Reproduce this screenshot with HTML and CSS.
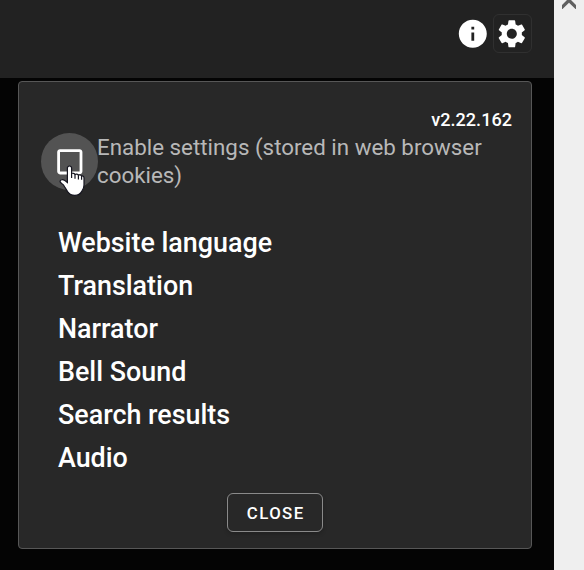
FILE: index.html
```
<!DOCTYPE html>
<html lang="en">
<head>
<meta charset="utf-8">
<title>Settings</title>
<link rel="stylesheet" href="styles.css">
</head>
<body>
<div class="app">
  <main class="page">
    <header class="topbar">
      <button class="icon-button" aria-label="Information">
        <svg class="icon" viewBox="0 0 24 24"><path d="M12 2C6.480 2 2 6.480 2 12s4.480 10 10 10 10-4.480 10-10S17.520 2 12 2zm1 15h-2v-6h2v6zm0-8h-2V7h2v2z"/></svg>
      </button>
      <button class="icon-button icon-button-active" aria-label="Settings">
        <svg class="icon" viewBox="0 0 24 24"><path d="M19.140 12.940c.04-.3.060-.61.060-.94 0-.32-.02-.64-.07-.94l2.030-1.580c.18-.14.23-.41.120-.61l-1.920-3.320c-.12-.22-.37-.29-.59-.22l-2.390.96c-.5-.38-1.030-.7-1.620-.94l-.36-2.540c-.04-.24-.24-.41-.48-.41h-3.840c-.24 0-.43.170-.47.410l-.36 2.540c-.59.240-1.130.570-1.620.940l-2.390-.96c-.22-.08-.47 0-.59.220L2.740 8.870c-.12.210-.08.470.120.610l2.030 1.580c-.05.300-.09.630-.09.940s.02.640.070.940l-2.030 1.580c-.18.140-.23.410-.12.610l1.920 3.320c.12.220.37.290.59.220l2.390-.96c.5.380 1.030.700 1.620.940l.36 2.540c.05.240.24.410.48.410h3.840c.24 0 .44-.17.470-.41l.36-2.540c.59-.24 1.130-.56 1.620-.94l2.390.96c.22.080.47 0 .59-.22l1.920-3.320c.12-.22.070-.47-.12-.61l-2.010-1.580zM12 15.600c-1.980 0-3.600-1.620-3.600-3.600s1.620-3.600 3.600-3.600 3.600 1.620 3.600 3.600-1.620 3.600-3.600 3.600z"/></svg>
      </button>
    </header>
    <section class="panel">
      <div class="version">v2.22.162</div>
      <label class="enable">
        <span class="checkbox">
          <svg class="icon" viewBox="0 0 24 24"><path d="M19 5v14H5V5h14m0-2H5c-1.100 0-2 .9-2 2v14c0 1.100.9 2 2 2h14c1.100 0 2-.9 2-2V5c0-1.100-.9-2-2-2z"/></svg>
          <svg class="pointer" viewBox="0 0 26 32"><path d="M10.500 1c1.300 0 2.100.9 2.100 2.100v5.400c1-.5 2.900-.3 3.400.9 1-.6 2.900-.4 3.400.8 1-.5 2.700-.3 3.200.8 1.200-.3 2.400.4 2.400 2v6.900c0 3-1 4.800-2.200 6.500-1.300 2.500-3.800 4-7 4-3.400 0-5.500-1.200-7.200-3.800l-3-4.900c-.7-1.400-1.500-2.300-2.900-3.200-1.300-.9-2-1.700-1.500-2.700.6-1.300 2.700-1.400 4.200-.5 1.400.8 2.200 1.500 3 2.200V3.100C8.400 1.900 9.200 1 10.500 1z"/><path class="pointer-lines" d="M12.600 8.500v4.500M16 9.400v4.400M19.400 10.200v4.200M22.600 11v3.800"/></svg>
        </span>
        <span class="enable-text">Enable settings (stored in web browser cookies)</span>
      </label>
      <nav class="sections">
        <div>Website language</div>
        <div>Translation</div>
        <div>Narrator</div>
        <div>Bell Sound</div>
        <div>Search results</div>
        <div>Audio</div>
      </nav>
      <button class="close">CLOSE</button>
    </section>
  </main>
  <aside class="scrollbar">
    <svg class="scroll-up" viewBox="0 0 14 9"><path d="M0 5L7-2l7 7v4h-.5L7 2.800.500 9H0z"/></svg>
  </aside>
</div>
</body>
</html>
```
FILE: styles.css
```
* {
  box-sizing: border-box;
}

body {
  margin: 0;
  font-family: Roboto, sans-serif;
  color: #fff;
  background: #040404;
}

button {
  padding: 0;
  border: 1px solid transparent;
  color: inherit;
  font-family: inherit;
  background: none;
}

.app {
  display: flex;
  height: 570px;
  overflow: hidden;
}

.page {
  width: 554px;
}

.topbar {
  display: flex;
  justify-content: flex-end;
  height: 78px;
  padding: 14px 22px 0 0;
  background: #222;
}

.icon-button {
  display: grid;
  place-items: center;
  width: 39px;
  height: 39px;
  padding-right: 1.500px;
  border-radius: 6px;
}

.icon-button-active {
  border-color: #303030;
}

.icon {
  display: block;
  width: 33.600px;
  height: 33.600px;
  fill: #fff;
}

.panel {
  display: flex;
  flex-direction: column;
  width: 514px;
  height: 468px;
  margin: 3px 0 0 18px;
  padding: 27px 19px 0;
  border: 1px solid #575757;
  border-radius: 4px;
  background: #282828;
}

.version {
  align-self: flex-end;
  font-size: 18.100px;
  font-weight: 500;
  line-height: 22px;
}

.enable {
  display: flex;
  align-items: center;
  height: 57px;
  margin: 2px 0 0 3px;
}

.checkbox {
  position: relative;
  display: grid;
  flex: none;
  place-items: center;
  width: 57px;
  height: 57px;
  border-radius: 50%;
  background: #535353;
}

.pointer {
  position: absolute;
  top: 32px;
  left: 18px;
  width: 26px;
  height: 32px;
  fill: #fff;
  stroke: #15151f;
  stroke-width: 1.200;
}

.pointer-lines {
  fill: none;
}

.enable-text {
  width: 400px;
  margin: -2px 0 0 -1px;
  color: #b8b8b8;
  font-size: 22.350px;
  line-height: 28px;
}

.sections {
  margin: 32px 0 0 20px;
  font-size: 26.880px;
  font-weight: 500;
  line-height: 43px;
}

.close {
  align-self: center;
  width: 96px;
  height: 39px;
  margin-top: 13px;
  padding-left: 1.400px;
  border-color: #8a8a8a;
  border-radius: 6px;
  font-size: 16.800px;
  font-weight: 500;
  letter-spacing: 1.400px;
  box-shadow: 0 2px 4px rgba(0, 0, 0, .2);
}

.scrollbar {
  width: 30px;
  background: #efefef;
}

.scroll-up {
  display: block;
  width: 14px;
  height: 9px;
  margin-left: 8px;
  fill: #606060;
}
```
